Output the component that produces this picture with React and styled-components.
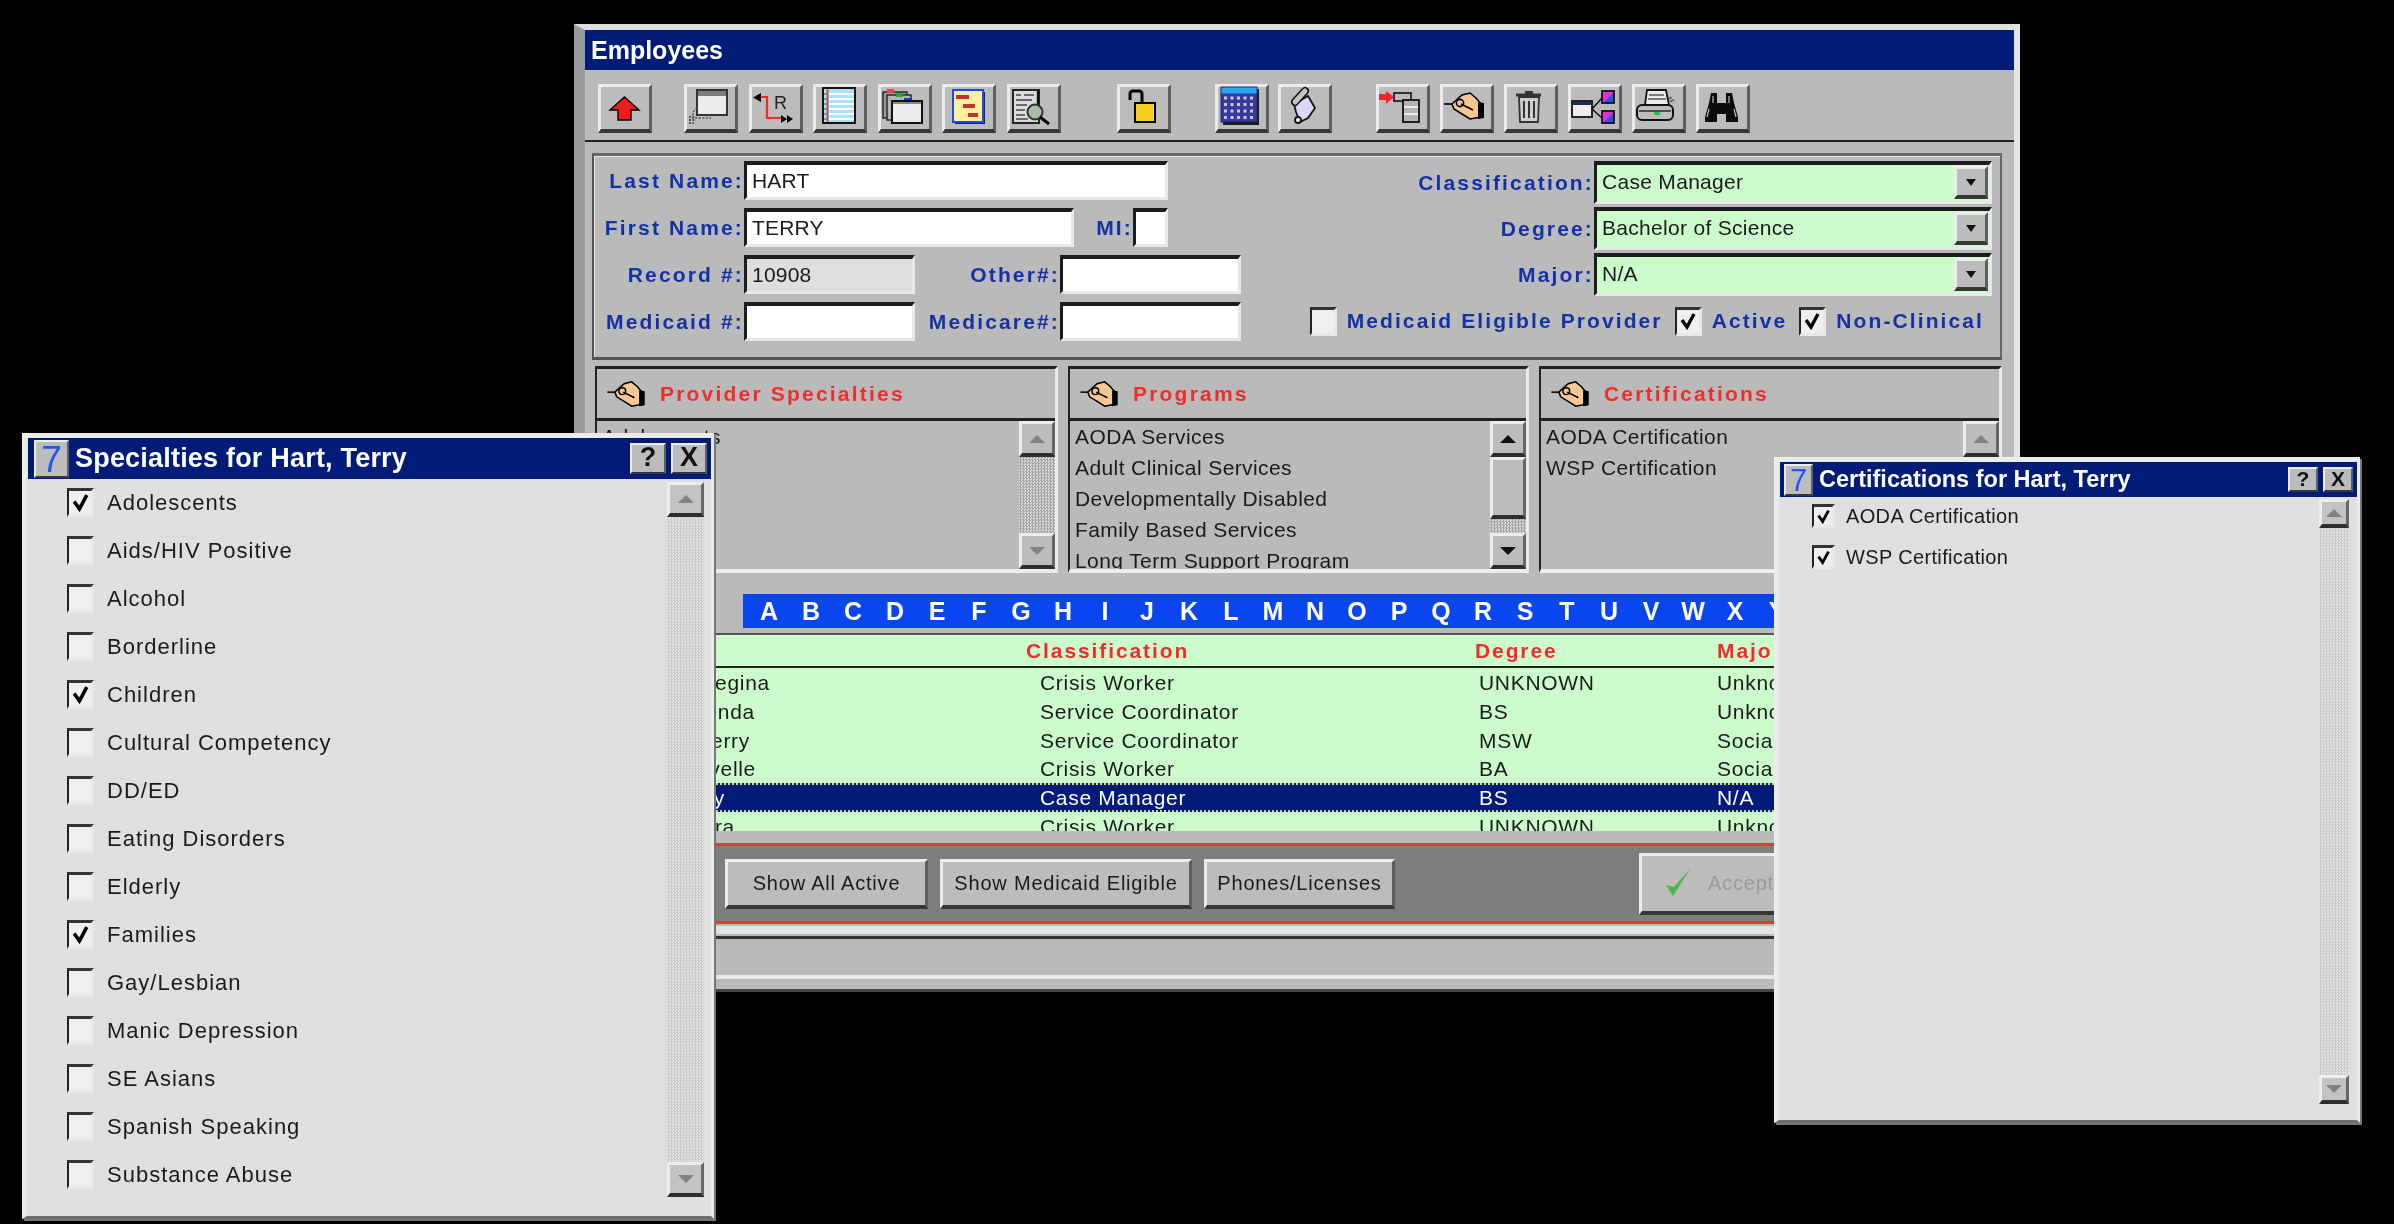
import React from 'react';
import styled, { createGlobalStyle, css } from 'styled-components';

const GlobalStyle = createGlobalStyle`
  html, body {
    margin: 0;
    background: #000;
  }
  * {
    box-sizing: border-box;
  }
`;

const raised = css`
  background: #bcbcbc;
  border-style: solid;
  border-width: 3px 3px 4px 3px;
  border-color: #ececec #5f5f5f #363636 #ececec;
`;

const sunken = css`
  border-style: solid;
  border-width: 4px 3px 3px 3px;
  border-color: #1c1c1c #e8e8e8 #e8e8e8 #1c1c1c;
`;

const Stage = styled.div`
  position: relative;
  width: 2394px;
  height: 1224px;
  overflow: hidden;
  background: #000;
  font-family: "Liberation Sans", Arial, sans-serif;
  color: #1a1a1a;
  filter: blur(0.55px);
`;

const MainWindow = styled.div`
  position: absolute;
  left: 574px;
  top: 24px;
  width: 1446px;
  height: 968px;
  overflow: hidden;
  background: #bababa;
  border-style: solid;
  border-width: 6px 6px 3px 11px;
  border-color: #dedede #e4e4e4 #444 #9a9a9a;
`;

const TitleBar = styled.div`
  height: 40px;
  background: #001c78;
  color: #fff;
  font-size: 25px;
  font-weight: 700;
  line-height: 40px;
  padding-left: 6px;
`;

const Toolbar = styled.div`
  display: flex;
  height: 72px;
  padding: 14px 0 0 13px;
  border-bottom: 2px solid #222;
`;

const ToolGroup = styled.div`
  display: flex;
  gap: ${(p) => p.$gap || 11}px;
  margin-left: ${(p) => p.$left || 0}px;
`;

const ToolButton = styled.button`
  ${raised}
  width: 54px;
  height: 49px;
  padding: 0;
  svg {
    display: block;
    overflow: visible;
  }
`;

const FormPanel = styled.div`
  display: flex;
  justify-content: space-between;
  width: 1410px;
  height: 207px;
  margin: 11px 0 0 7px;
  padding: 5px 8px 0 0;
  border-style: solid;
  border-width: 3px 2px;
  border-color: #666 #666 #555 #555;
  box-shadow: inset 1px 1px 0 #ececec;
`;

const FormColumn = styled.div`
  display: flex;
  flex-direction: column;
  gap: 8px;
`;

const FormRow = styled.div`
  display: flex;
  align-items: center;
  height: 39px;
`;

const Label = styled.label`
  width: ${(p) => p.$w}px;
  text-align: right;
  font-size: 21px;
  font-weight: 700;
  letter-spacing: 2.15px;
  color: #1432a8;
  white-space: nowrap;
`;

const TextField = styled.div`
  ${sunken}
  width: ${(p) => p.$w}px;
  height: 39px;
  background: ${(p) => (p.$readOnly ? '#dcdfdc' : '#fff')};
  font-size: 21px;
  letter-spacing: 0.2px;
  line-height: 31px;
  padding-left: 5px;
`;

const RightColumn = styled.div`
  display: flex;
  flex-direction: column;
  align-items: flex-end;
  gap: 3px;
`;

const ComboRow = styled.div`
  display: flex;
  align-items: center;
  height: 43px;
`;

const Combo = styled.div`
  ${sunken}
  position: relative;
  width: 398px;
  height: 43px;
  background: #ccfccc;
  font-size: 21px;
  letter-spacing: 0.3px;
  line-height: 34px;
  padding-left: 5px;
`;

const ComboButton = styled.span`
  ${raised}
  position: absolute;
  right: 1px;
  top: 1px;
  width: 34px;
  height: 33px;
  display: flex;
  align-items: center;
  justify-content: center;
  &::before {
    content: '';
    border-style: solid;
    border-width: 7px 5px 0 5px;
    border-color: #111 transparent transparent transparent;
  }
`;

const CheckRow = styled.div`
  display: flex;
  align-items: center;
  height: 28px;
  margin-top: 8px;
  padding-right: 8px;
`;

const InlineCheckText = styled.span`
  margin: 0 12px 0 10px;
  font-size: 21px;
  font-weight: 700;
  letter-spacing: 2.1px;
  color: #1432a8;
  white-space: nowrap;
  &:last-child {
    margin-right: 0;
  }
`;

const Box = styled.span`
  display: inline-flex;
  flex: none;
  align-items: center;
  justify-content: center;
  width: ${(p) => p.$w || 27}px;
  height: ${(p) => p.$h || 29}px;
  background: #efefef;
  border-style: solid;
  border-width: 3px 3px 3px 2px;
  border-color: #333 #e8e8e8 #e8e8e8 #222;
`;

const ListRow = styled.div`
  display: grid;
  grid-template-columns: 463px 461px 463px;
  column-gap: 10px;
  width: 1407px;
  margin: 6px 0 0 10px;
`;

const ListPanel = styled.section`
  height: 207px;
  border-style: solid;
  border-width: 3px 3px 4px 2px;
  border-color: #222 #ececec #ececec #222;
`;

const PanelHeader = styled.div`
  display: flex;
  align-items: center;
  gap: 14px;
  height: 52px;
  padding-left: 10px;
  border-bottom: 3px solid #222;
`;

const PanelTitle = styled.h3`
  margin: 0;
  font-size: 21px;
  font-weight: 700;
  letter-spacing: 2.2px;
  color: #f02c2c;
`;

const PanelBody = styled.div`
  display: flex;
  height: 148px;
`;

const ListItems = styled.ul`
  flex: 1;
  margin: 0;
  padding: 0 0 0 5px;
  list-style: none;
  overflow: hidden;
`;

const ListItem = styled.li`
  height: 31px;
  line-height: 31px;
  font-size: 21px;
  letter-spacing: 0.4px;
  white-space: nowrap;
`;

const ScrollColumn = styled.div`
  display: flex;
  flex-direction: column;
  flex: none;
  width: ${(p) => p.$w}px;
  margin: ${(p) => p.$margin || '0'};
`;

const ScrollButton = styled.div`
  flex: none;
  height: ${(p) => p.$h}px;
  display: flex;
  align-items: center;
  justify-content: center;
  background: ${(p) => p.$bg || '#bcbcbc'};
  border-style: solid;
  border-width: 3px 3px 4px 3px;
  border-color: #ececec #666 #2e2e2e #ececec;
`;

const UpArrow = styled.span`
  border-style: solid;
  border-width: 0 8px 8px 8px;
  border-color: transparent transparent ${(p) => (p.$off ? '#828282' : '#111')} transparent;
`;

const DownArrow = styled.span`
  border-style: solid;
  border-width: 8px 8px 0 8px;
  border-color: ${(p) => (p.$off ? '#828282' : '#111')} transparent transparent transparent;
`;

const ScrollTrack = styled.div`
  flex: 1;
  background: repeating-conic-gradient(${(p) => p.$a} 0 25%, ${(p) => p.$b} 0 50%) 0 0 / 3px 3px;
`;

const ScrollThumb = styled.div`
  flex: none;
  height: 62px;
  background: #bcbcbc;
  border-style: solid;
  border-width: 3px 3px 4px 3px;
  border-color: #ececec #666 #2e2e2e #ececec;
`;

const AlphaBar = styled.div`
  display: flex;
  width: 1120px;
  height: 34px;
  margin: 21px 0 0 158px;
  padding-left: 5px;
  background: #0a46f0;
`;

const AlphaLetter = styled.span`
  flex: none;
  width: 42px;
  text-align: center;
  color: #fff;
  font-size: 25px;
  font-weight: 700;
  line-height: 34px;
`;

const DataGrid = styled.div`
  width: 1419px;
  height: 198px;
  margin: 5px 0 0 10px;
  overflow: hidden;
  background: #ccfccc;
  border-top: 2px solid #555;
`;

const GridHeader = styled.div`
  display: grid;
  grid-template-columns: 431px 449px 242px 1fr;
  height: 33px;
  line-height: 31px;
  border-bottom: 2px solid #222;
  font-size: 21px;
  font-weight: 700;
  letter-spacing: 1.9px;
  color: #f02c2c;
`;

const GridRow = styled.div`
  display: grid;
  grid-template-columns: 445px 439px 238px 1fr;
  height: 28.8px;
  line-height: 29px;
  font-size: 21px;
  letter-spacing: 0.7px;
  white-space: nowrap;
  ${(p) =>
    p.$selected &&
    css`
      background: #001c78;
      color: #fff;
      border-top: 2px dotted #d9d96a;
      border-bottom: 2px dotted #d9d96a;
      line-height: 25px;
    `}
`;

const NameCell = styled.span`
  width: ${(p) => p.$end}px;
  text-align: right;
`;

const ActionBar = styled.div`
  display: flex;
  align-items: center;
  height: 81px;
  margin-top: 12px;
  padding-left: 140px;
  gap: 12px;
  background: #7e7e7e;
  border-top: 3px solid #e8392c;
  border-bottom: 3px solid #e8392c;
`;

const ActionButton = styled.button`
  ${raised}
  height: 50px;
  width: ${(p) => p.$w}px;
  padding: 0;
  font-family: inherit;
  font-size: 20px;
  letter-spacing: 0.8px;
  color: #1a1a1a;
`;

const AcceptButton = styled.button`
  ${raised}
  display: flex;
  align-items: center;
  gap: 14px;
  width: 240px;
  height: 62px;
  margin-left: 232px;
  padding: 0 0 0 22px;
  font-family: inherit;
  font-size: 20px;
  letter-spacing: 0.8px;
  color: #9a9a9a;
`;

const StatusArea = styled.div`
  margin-top: 2px;
  padding-top: 2px;
  border-top: 8px solid #e4e4e4;
`;

const StatusInner = styled.div`
  height: 43px;
  border-top: 3px solid #333;
  border-bottom: 4px solid #e8e8e8;
`;

const Dialog = styled.div`
  position: absolute;
  left: ${(p) => p.$left}px;
  top: ${(p) => p.$top}px;
  width: ${(p) => p.$width}px;
  height: ${(p) => p.$height}px;
  display: flex;
  flex-direction: column;
  background: #dde0dd;
  border-style: solid;
  border-width: 5px 3px 3px 5px;
  border-color: #ececec #ececec #6e6e6e #ececec;
  box-shadow: 2px 2px 0 #777;
`;

const DialogTitle = styled.div`
  flex: none;
  display: flex;
  align-items: center;
  height: ${(p) => p.$size.title}px;
  margin-left: 1px;
  padding: 0 4px 0 ${(p) => p.$size.iconPad}px;
  background: #001c78;
  color: #fff;
  font-size: ${(p) => p.$size.titleFont}px;
  font-weight: 700;
`;

const AppIcon = styled.span`
  ${raised}
  flex: none;
  width: ${(p) => p.$size.icon}px;
  height: ${(p) => p.$size.title - 3}px;
  margin-right: 6px;
  border-width: 2px;
  color: #2458f4;
  font-size: ${(p) => p.$size.title - 4}px;
  font-weight: 400;
  line-height: ${(p) => p.$size.title - 6}px;
  text-align: center;
`;

const DialogTitleText = styled.span`
  flex: 1;
  white-space: nowrap;
  letter-spacing: ${(p) => p.$size.titleSpacing}px;
`;

const TitleButton = styled.span`
  ${raised}
  flex: none;
  width: ${(p) => p.$size.btn}px;
  height: ${(p) => p.$size.title - 10}px;
  margin-left: 5px;
  color: #111;
  font-size: ${(p) => p.$size.title - 14}px;
  line-height: ${(p) => p.$size.title - 16}px;
  text-align: center;
  border-width: 2px;
`;

const DialogBody = styled.div`
  flex: 1;
  min-height: 0;
  display: flex;
`;

const CheckList = styled.ul`
  flex: 1;
  margin: 0;
  padding: ${(p) => p.$size.listTop}px 0 0 ${(p) => p.$size.listLeft}px;
  list-style: none;
`;

const CheckItem = styled.li`
  display: flex;
  align-items: flex-start;
  gap: ${(p) => p.$size.gap}px;
  height: ${(p) => p.$size.row}px;
  font-size: ${(p) => p.$size.font}px;
  letter-spacing: ${(p) => p.$size.spacing}px;
  line-height: ${(p) => p.$size.boxH}px;
`;

// toolbar drawings use the button's own pixel coordinates
const Glyph = ({ children }) => (
  <svg width="48" height="42" viewBox="3 3 48 42">
    {children}
  </svg>
);

const Check = ({ size = 18 }) => (
  <svg width={size} height={size} viewBox="0 0 18 18">
    <path d="M3 8l5 7 7-13" fill="none" stroke="#000" strokeWidth="3.4" />
  </svg>
);

const HandDrawing = () => (
  <>
    <path d="M4 20h12" stroke="#000" strokeWidth="1.6" />
    <path d="M12 20l10-9 8-2 6 5 5 6v13l-11 2-8-5-8-5z" fill="#f5c890" stroke="#000" strokeWidth="1.6" />
    <path d="M38 18l6 1v15l-6 1z" fill="#000" />
    <circle cx="20" cy="19" r="3.6" fill="none" stroke="#000" strokeWidth="1.6" />
    <path d="M21 20l12 6" stroke="#000" strokeWidth="1.6" />
  </>
);

const HandIcon = () => (
  <svg width="39" height="28" viewBox="4 7 41 30">
    <HandDrawing />
  </svg>
);

const tools = {
  back: <path d="M26.5 13L41 26h-8v10H20V26h-8z" fill="#f01c1c" stroke="#000" strokeWidth="1.4" />,
  window: (
    <>
      <rect x="13" y="6" width="30" height="25" fill="#ececec" stroke="#333" strokeWidth="2" />
      <rect x="14" y="7" width="28" height="5" fill="#7c7c7c" />
      <path d="M13 24l-4 4v6h18" fill="none" stroke="#555" strokeWidth="1.6" strokeDasharray="2 1.5" />
      <path d="M5 33h7M5 36h7M5 39h5" stroke="#555" strokeWidth="1.8" strokeDasharray="2 1.4" />
    </>
  ),
  route: (
    <>
      <path d="M4 13.5L12 9v9z" fill="#000" />
      <path d="M12 13h6v21h14" fill="none" stroke="#f02828" strokeWidth="2.2" />
      <path d="M32 31l6 4-6 4zM38 31l6 4-6 4z" fill="#000" />
      <text x="25" y="25" fontSize="18" fontFamily="Liberation Sans" fill="#222">R</text>
    </>
  ),
  notebook: (
    <>
      <rect x="10" y="4" width="32" height="35" fill="#a8e4f8" stroke="#111" strokeWidth="2" />
      <path d="M16 10h25M16 15h25M16 20h25M16 25h25M16 30h25M16 35h25" stroke="#fff" strokeWidth="1.8" />
      <path d="M11 10h3M11 15h3M11 20h3M11 25h3M11 30h3M11 35h3" stroke="#58a8c8" strokeWidth="1.8" />
      <path d="M14.5 5v33" stroke="#e83838" strokeWidth="1.8" />
    </>
  ),
  tabs: (
    <>
      <rect x="5" y="8" width="24" height="26" fill="#9c9c9c" stroke="#222" strokeWidth="1.4" />
      <rect x="9" y="11" width="24" height="25" fill="#b4b4b4" stroke="#222" strokeWidth="1.4" />
      <rect x="9" y="5" width="7" height="4" fill="#e04848" />
      <rect x="18" y="9" width="7" height="4" fill="#20a840" />
      <rect x="26" y="14" width="8" height="3.6" fill="#1838d8" />
      <rect x="14" y="17" width="30" height="22" fill="#ececec" stroke="#111" strokeWidth="2" />
      <rect x="15" y="18" width="28" height="2" fill="#888" />
    </>
  ),
  gantt: (
    <>
      <rect x="13" y="8" width="30" height="32" fill="#16207a" />
      <rect x="11" y="6" width="30" height="32" fill="#fff09c" stroke="#2048e8" strokeWidth="2" />
      <rect x="14" y="11" width="13" height="4" fill="#c83030" />
      <rect x="21" y="20" width="12" height="4" fill="#c83030" />
      <rect x="26" y="29" width="10" height="4" fill="#c83030" />
    </>
  ),
  report: (
    <>
      <rect x="6" y="6" width="26" height="33" fill="#dcdcdc" stroke="#222" strokeWidth="2" />
      <path d="M9 11h5M17 11h10M9 16h16M9 21h11M9 26h9M9 31h9M9 35h12" stroke="#444" strokeWidth="1.6" />
      <path d="M31 7v14" stroke="#111" strokeWidth="2.4" />
      <circle cx="28" cy="28" r="7.5" fill="#a8bcaa" stroke="#333" strokeWidth="2" />
      <path d="M33 33l9 7" stroke="#000" strokeWidth="3" />
    </>
  ),
  lock: (
    <>
      <path d="M13 16v-6q0-3 3-3h6q3 0 3 3v10" fill="none" stroke="#000" strokeWidth="3" />
      <rect x="18" y="19" width="20" height="19" fill="#f8d020" stroke="#000" strokeWidth="2" />
    </>
  ),
  calendar: (
    <>
      <rect x="8" y="5" width="36" height="36" fill="#1a1a1a" />
      <rect x="6" y="3" width="36" height="35" fill="#3a3a9c" stroke="#20206c" strokeWidth="1" />
      <rect x="6.5" y="3.5" width="35" height="6" fill="#28a8f0" />
      <path d="M9 14h30M9 20.5h30M9 27h30M9 33.5h30" stroke="#c4c8e8" strokeWidth="3" strokeDasharray="3 3.5" />
    </>
  ),
  scroll: (
    <>
      <path d="M16 20l14-8 7 12-7 10-8 4-4-10z" fill="#d8d8f8" stroke="#111" strokeWidth="1.8" />
      <path d="M27 7L17 18" stroke="#111" strokeWidth="8" strokeLinecap="round" />
      <path d="M27 7L17 18" stroke="#c4c4c4" strokeWidth="5" strokeLinecap="round" />
      <circle cx="20" cy="36" r="3" fill="#eee" stroke="#111" strokeWidth="1.8" />
    </>
  ),
  treeAdd: (
    <>
      <rect x="18" y="9" width="17" height="8" fill="#bbb" stroke="#111" strokeWidth="1.6" />
      <rect x="27" y="16" width="16" height="22" fill="#b4b4b4" stroke="#111" strokeWidth="1.8" />
      <path d="M28 23h14M28 30h14" stroke="#fff" strokeWidth="1.6" />
      <path d="M3 10h7V7l8 6-8 7v-4H3z" fill="#ff2030" />
    </>
  ),
  hand: <HandDrawing />,
  trash: (
    <>
      <rect x="21" y="7" width="8" height="3" fill="#333" />
      <path d="M12 11h25" stroke="#333" strokeWidth="3" />
      <path d="M15 13l1 25h18l1-25z" fill="#cfcfcf" stroke="#333" strokeWidth="1.8" />
      <path d="M20 17v17M25 17v17M30 17v17" stroke="#333" strokeWidth="2" />
    </>
  ),
  org: (
    <>
      <path d="M24 25l10-11M24 25l10 9" stroke="#111" strokeWidth="1.6" fill="none" />
      <rect x="4" y="17" width="20" height="16" fill="#eee" stroke="#111" strokeWidth="1.8" />
      <rect x="5" y="18" width="18" height="3" fill="#1c3060" />
      <rect x="34" y="7" width="12" height="12" fill="#e030d0" stroke="#111" strokeWidth="1.8" />
      <rect x="34" y="27" width="12" height="12" fill="#e030d0" stroke="#111" strokeWidth="1.8" />
      <path d="M36 18l9-9v9zM36 38l9-9v9z" fill="#2858e8" />
    </>
  ),
  printer: (
    <>
      <path d="M15 6h19l3 15H13z" fill="#ececec" stroke="#111" strokeWidth="1.8" />
      <path d="M17 11h15M16 15h18" stroke="#555" strokeWidth="1.6" />
      <rect x="5" y="21" width="36" height="15" rx="5" fill="#bdbdbd" stroke="#111" strokeWidth="2" />
      <path d="M7 27h32" stroke="#333" strokeWidth="1.6" />
      <rect x="22" y="28" width="6" height="3" fill="#28c048" />
      <path d="M36 14l5 5M38 13l5 5" stroke="#333" strokeWidth="1.4" strokeDasharray="2 1.4" />
    </>
  ),
  binoculars: (
    <>
      <path d="M15 9h6v10h9V9h6l2 10 4 14v5H30v-8h-9v8H9v-5l4-14z" fill="#0c0c0c" />
      <path d="M17 12v7M33 12v7M13 25l-2 8M38 25l2 8" stroke="#bdbdbd" strokeWidth="1.2" />
    </>
  ),
};

const toolGroups = [
  { left: 0, gap: 11, items: ['back'] },
  { left: 32, gap: 10.5, items: ['window', 'route', 'notebook', 'tabs', 'gantt', 'report'] },
  { left: 56, gap: 10, items: ['lock'] },
  { left: 44, gap: 9, items: ['calendar', 'scroll'] },
  { left: 44, gap: 10, items: ['treeAdd', 'hand', 'trash', 'org', 'printer', 'binoculars'] },
];

const alphabet = 'ABCDEFGHIJKLMNOPQRSTUVWXYZ'.split('');

const panels = [
  {
    title: 'Provider Specialties',
    items: ['Adolescents'],
    disabled: true,
  },
  {
    title: 'Programs',
    items: [
      'AODA Services',
      'Adult Clinical Services',
      'Developmentally Disabled',
      'Family Based Services',
      'Long Term Support Program',
    ],
    thumb: true,
  },
  {
    title: 'Certifications',
    items: ['AODA Certification', 'WSP Certification'],
    disabled: true,
  },
];

const employees = [
  { name: 'Regina', end: 175, cls: 'Crisis Worker', deg: 'UNKNOWN', major: 'Unknown' },
  { name: 'Brenda', end: 160, cls: 'Service Coordinator', deg: 'BS', major: 'Unknown' },
  { name: 'Terry', end: 155, cls: 'Service Coordinator', deg: 'MSW', major: 'Social' },
  { name: 'Lavelle', end: 161, cls: 'Crisis Worker', deg: 'BA', major: 'Social' },
  { name: 'Terry', end: 130, cls: 'Case Manager', deg: 'BS', major: 'N/A', selected: true },
  { name: 'Sandra', end: 140, cls: 'Crisis Worker', deg: 'UNKNOWN', major: 'Unknown' },
];

const specialties = [
  ['Adolescents', true],
  ['Aids/HIV Positive'],
  ['Alcohol'],
  ['Borderline'],
  ['Children', true],
  ['Cultural Competency'],
  ['DD/ED'],
  ['Eating Disorders'],
  ['Elderly'],
  ['Families', true],
  ['Gay/Lesbian'],
  ['Manic Depression'],
  ['SE Asians'],
  ['Spanish Speaking'],
  ['Substance Abuse'],
];

const certifications = [
  ['AODA Certification', true],
  ['WSP Certification', true],
];

const bigDialog = {
  title: 41, titleFont: 27, titleSpacing: 0.2, iconPad: 6, icon: 35, btn: 36,
  listTop: 9, listLeft: 40, gap: 13, row: 48, font: 22, spacing: 1, boxW: 27, boxH: 29,
  scrollW: 37, scrollBtn: 35, scrollMargin: '3px 7px 19px 0',
};

const smallDialog = {
  title: 35, titleFont: 23.5, titleSpacing: 0, iconPad: 4, icon: 29, btn: 30,
  listTop: 7, listLeft: 33, gap: 11, row: 41, font: 20, spacing: 0.35, boxW: 23, boxH: 24,
  scrollW: 30, scrollBtn: 29, scrollMargin: '2px 8px 16px 0',
};

function CheckDialog({ title, rows, size, left, top, width, height }) {
  return (
    <Dialog $left={left} $top={top} $width={width} $height={height}>
      <DialogTitle $size={size}>
        <AppIcon $size={size}>7</AppIcon>
        <DialogTitleText $size={size}>{title}</DialogTitleText>
        <TitleButton $size={size}>?</TitleButton>
        <TitleButton $size={size}>X</TitleButton>
      </DialogTitle>
      <DialogBody>
        <CheckList $size={size}>
          {rows.map(([label, checked]) => (
            <CheckItem key={label} $size={size}>
              <Box $w={size.boxW} $h={size.boxH}>
                {checked && <Check size={size.boxW - 8} />}
              </Box>
              {label}
            </CheckItem>
          ))}
        </CheckList>
        <ScrollColumn $w={size.scrollW} $margin={size.scrollMargin}>
          <ScrollButton $h={size.scrollBtn} $bg="#c2c4c2"><UpArrow $off /></ScrollButton>
          <ScrollTrack $a="#c8cac8" $b="#e4e6e4" />
          <ScrollButton $h={size.scrollBtn} $bg="#c2c4c2"><DownArrow $off /></ScrollButton>
        </ScrollColumn>
      </DialogBody>
    </Dialog>
  );
}

export default function App() {
  return (
    <Stage>
      <GlobalStyle />
      <MainWindow>
        <TitleBar>Employees</TitleBar>
        <Toolbar>
          {toolGroups.map((group) => (
            <ToolGroup key={group.items[0]} $left={group.left} $gap={group.gap}>
              {group.items.map((name) => (
                <ToolButton key={name}><Glyph>{tools[name]}</Glyph></ToolButton>
              ))}
            </ToolGroup>
          ))}
        </Toolbar>

        <FormPanel>
          <FormColumn>
            <FormRow>
              <Label $w={150}>Last Name:</Label>
              <TextField $w={424}>HART</TextField>
            </FormRow>
            <FormRow>
              <Label $w={150}>First Name:</Label>
              <TextField $w={330}>TERRY</TextField>
              <Label $w={59}>MI:</Label>
              <TextField $w={35} />
            </FormRow>
            <FormRow>
              <Label $w={150}>Record #:</Label>
              <TextField $w={171} $readOnly>10908</TextField>
              <Label $w={145}>Other#:</Label>
              <TextField $w={181} />
            </FormRow>
            <FormRow>
              <Label $w={150}>Medicaid #:</Label>
              <TextField $w={171} />
              <Label $w={145}>Medicare#:</Label>
              <TextField $w={181} />
            </FormRow>
          </FormColumn>
          <RightColumn>
            <ComboRow>
              <Label $w={300}>Classification:</Label>
              <Combo>Case Manager<ComboButton /></Combo>
            </ComboRow>
            <ComboRow>
              <Label $w={300}>Degree:</Label>
              <Combo>Bachelor of Science<ComboButton /></Combo>
            </ComboRow>
            <ComboRow>
              <Label $w={300}>Major:</Label>
              <Combo>N/A<ComboButton /></Combo>
            </ComboRow>
            <CheckRow>
              <Box />
              <InlineCheckText>Medicaid Eligible Provider</InlineCheckText>
              <Box><Check /></Box>
              <InlineCheckText>Active</InlineCheckText>
              <Box><Check /></Box>
              <InlineCheckText>Non-Clinical</InlineCheckText>
            </CheckRow>
          </RightColumn>
        </FormPanel>

        <ListRow>
          {panels.map((panel) => (
            <ListPanel key={panel.title}>
              <PanelHeader>
                <HandIcon />
                <PanelTitle>{panel.title}</PanelTitle>
              </PanelHeader>
              <PanelBody>
                <ListItems>
                  {panel.items.map((item) => (
                    <ListItem key={item}>{item}</ListItem>
                  ))}
                </ListItems>
                <ScrollColumn $w={36}>
                  <ScrollButton $h={36}><UpArrow $off={panel.disabled} /></ScrollButton>
                  {panel.thumb && <ScrollThumb />}
                  <ScrollTrack $a="#a4a4a4" $b="#d8d8d8" />
                  <ScrollButton $h={36}><DownArrow $off={panel.disabled} /></ScrollButton>
                </ScrollColumn>
              </PanelBody>
            </ListPanel>
          ))}
        </ListRow>

        <AlphaBar>
          {alphabet.map((letter) => (
            <AlphaLetter key={letter}>{letter}</AlphaLetter>
          ))}
        </AlphaBar>

        <DataGrid>
          <GridHeader>
            <span />
            <span>Classification</span>
            <span>Degree</span>
            <span>Major</span>
          </GridHeader>
          {employees.map((row) => (
            <GridRow key={row.name + row.end} $selected={row.selected}>
              <NameCell $end={row.end}>{row.name}</NameCell>
              <span>{row.cls}</span>
              <span>{row.deg}</span>
              <span>{row.major}</span>
            </GridRow>
          ))}
        </DataGrid>

        <ActionBar>
          <ActionButton $w={203}>Show All Active</ActionButton>
          <ActionButton $w={252}>Show Medicaid Eligible</ActionButton>
          <ActionButton $w={191}>Phones/Licenses</ActionButton>
          <AcceptButton>
            <svg width="30" height="32" viewBox="0 0 30 32">
              <path d="M2 18l7 11L26 2 10 20z" fill="#48b848" />
            </svg>
            Accept
          </AcceptButton>
        </ActionBar>

        <StatusArea>
          <StatusInner />
        </StatusArea>
      </MainWindow>

      <CheckDialog
        title="Specialties for Hart, Terry"
        rows={specialties}
        size={bigDialog}
        left={22}
        top={433}
        width={692}
        height={786}
      />
      <CheckDialog
        title="Certifications for Hart, Terry"
        rows={certifications}
        size={smallDialog}
        left={1774}
        top={457}
        width={586}
        height={666}
      />
    </Stage>
  );
}
